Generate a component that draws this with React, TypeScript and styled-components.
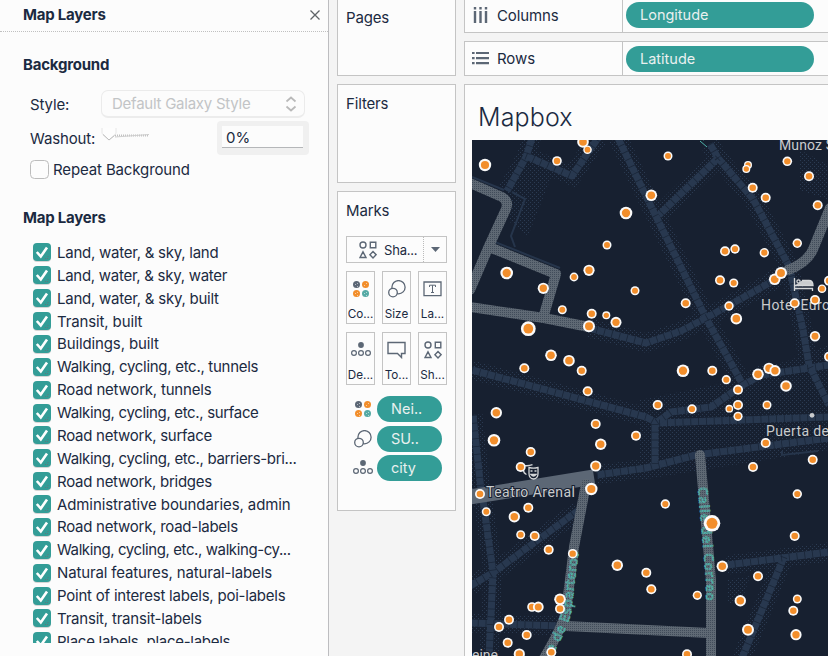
import React from 'react';
import styled, { createGlobalStyle } from 'styled-components';

const ink = '#1b2a41';
const teal = '#339d97';
const slate = '#5c6775';
const line = '#c4c4c4';
const paper = '#fcfcfc';

const GlobalStyle = createGlobalStyle`
  * { box-sizing: border-box; }
  html, body { margin: 0; overflow: hidden; }
  body { font-family: Inter, "Liberation Sans", sans-serif; font-size: 15px; color: ${ink}; background: #f4f4f4; }
`;

const Workspace = styled.div`
  display: flex;
  width: 828px;
  height: 656px;
  overflow: hidden;
`;

const LayersPanel = styled.aside`
  display: flex;
  flex-direction: column;
  width: 329px;
  flex: none;
  background: ${paper};
  border-right: 1px solid #bdbdc0;
`;

const PanelHeader = styled.header`
  display: flex;
  align-items: center;
  justify-content: space-between;
  height: 32px;
  flex: none;
  padding: 0 7px 2px 23px;
  border-bottom: 1px dotted #c0c0c0;
`;

const Heading = styled.h2<{ $top?: number }>`
  margin: ${p => p.$top ?? 0}px 0 0;
  font-size: 15px;
  line-height: 20px;
  font-weight: 700;
  letter-spacing: -0.22px;
`;

const Section = styled.section`
  padding-left: 23px;
`;

const FieldRow = styled.div<{ $height: number; $gap: number }>`
  display: flex;
  align-items: center;
  height: ${p => p.$height}px;
  margin-top: ${p => p.$gap}px;
  padding-left: 7px;
`;

const FieldLabel = styled.span<{ $width?: number }>`
  width: ${p => (p.$width ? p.$width + 'px' : 'auto')};
  flex: none;
  white-space: nowrap;
  letter-spacing: -0.13px;
`;

const StyleSelect = styled.div`
  display: flex;
  align-items: center;
  justify-content: space-between;
  width: 204px;
  height: 28px;
  padding: 0 7px 0 10px;
  color: #c2c4c6;
  letter-spacing: -0.25px;
  border: 1px solid #ebebeb;
  border-bottom: 2px solid #ececec;
  border-radius: 7px;
  white-space: nowrap;
`;

const PercentBox = styled.div`
  width: 92px;
  height: 34px;
  margin-left: 66px;
  padding: 5px 6px 0 5px;
  background: #f0f0f0;
  border-radius: 4px;
`;

const PercentInput = styled.div`
  height: 22px;
  padding-left: 4px;
  line-height: 24px;
  background: ${paper};
  border-bottom: 1px solid #b5b7b9;
  font-size: 15px;
`;

const EmptyCheck = styled.span`
  width: 19px;
  height: 19px;
  margin-right: 4px;
  border: 1px solid #bcbcbc;
  border-radius: 4.5px;
`;

const LayerList = styled.ul`
  height: 402px;
  margin: 13px 0 0;
  padding: 0 0 0 33px;
  overflow: hidden;
  list-style: none;
`;

const LayerItem = styled.li`
  display: flex;
  align-items: center;
  height: 22.88px;
`;

const CheckBox = styled.span`
  display: flex;
  width: 18px;
  height: 18px;
  margin-right: 6px;
  background: ${teal};
  border-radius: 4px;
  box-shadow: 0 1px 0 #d5d5d5;
`;

const LayerName = styled.span<{ $track: number }>`
  letter-spacing: ${p => p.$track}px;
  white-space: nowrap;
`;

const CardColumn = styled.div`
  display: flex;
  flex-direction: column;
  gap: 8px;
  width: 119px;
  flex: none;
  margin-left: 8px;
`;

const Card = styled.section<{ $height: number; $top: number }>`
  height: ${p => p.$height}px;
  flex: none;
  padding: ${p => p.$top}px 8px 0 8px;
  background: ${paper};
  border: 1px solid ${line};

  &:first-child { border-top: 0; }
`;

const CardTitle = styled.div`
  line-height: 20px;
  letter-spacing: -0.15px;
`;

const MarkSelect = styled.div`
  display: flex;
  width: 101px;
  height: 27px;
  margin-top: 15px;
  border: 1px solid ${line};
`;

const MarkType = styled.div`
  display: flex;
  flex: 1;
  align-items: center;
  gap: 7px;
  padding-left: 12px;
  font-size: 13px;
  letter-spacing: -0.2px;
`;

const Caret = styled.div`
  display: flex;
  align-items: center;
  justify-content: center;
  width: 23px;
  border-left: 1px dotted #bbb;
`;

const MarkGrid = styled.div`
  display: grid;
  grid-template-columns: repeat(3, 29px);
  column-gap: 7px;
  row-gap: 8px;
  margin-top: 8px;
`;

const MarkButton = styled.div`
  display: flex;
  flex-direction: column;
  align-items: center;
  justify-content: space-between;
  height: 53px;
  padding: 8px 0 0;
  border: 1px solid ${line};
  font-size: 11.7px;
  line-height: 17px;
  white-space: nowrap;
`;

const PillStack = styled.div`
  display: flex;
  flex-direction: column;
  gap: 3.5px;
  margin-top: 11px;
  padding-left: 6px;
`;

const PillRow = styled.div`
  display: flex;
  align-items: center;
`;

const PillIcon = styled.span`
  display: flex;
  justify-content: center;
  width: 21px;
  margin-right: 4px;
`;

const Pill = styled.span<{ $width: number }>`
  width: ${p => p.$width}px;
  height: 26px;
  flex: none;
  padding-left: 14px;
  border-radius: 13px;
  background: ${teal};
  color: #e9f0ef;
  font-size: 14.5px;
  line-height: 26px;
  white-space: nowrap;
`;

const ViewColumn = styled.main`
  display: flex;
  flex-direction: column;
  gap: 8px;
  flex: 1;
  min-width: 0;
  margin-left: 8px;
`;

const Shelf = styled.div<{ $height: number }>`
  display: flex;
  align-items: center;
  height: ${p => p.$height}px;
  flex: none;
  background: ${paper};
  border: solid ${line};
  border-width: 1px 0 1px 1px;

  &:first-child {
    border-top: 0;
  }
`;

const ShelfLabel = styled.div<{ $lift?: number }>`
  display: flex;
  align-items: center;
  gap: 8px;
  align-self: stretch;
  width: 158px;
  margin-right: 3px;
  padding: 0 0 ${p => p.$lift ?? 0}px 7px;
  border-right: 1px solid ${line};
  letter-spacing: -0.1px;
`;

const PillSlot = styled.div<{ $lift?: number }>`
  padding-bottom: ${p => p.$lift ?? 0}px;
  display: flex;
`;

const Sheet = styled.section`
  flex: 1;
  background: ${paper};
  border: solid ${line};
  border-width: 1px 0 0 1px;
`;

const SheetTitle = styled.h1`
  height: 55px;
  margin: 0;
  padding: 14px 0 0 13px;
  font-size: 25px;
  line-height: 37px;
  font-weight: 300;
  letter-spacing: 0.15px;
`;

const MapCanvas = styled.svg`
  display: block;
  width: 356px;
  height: 516px;
  margin-left: 7px;
`;

const ShapesIcon = () => (
  <svg width="18" height="18" viewBox="0 0 18 18" fill="none" stroke={slate} strokeWidth="1.4">
    <circle cx="4" cy="4" r="3" />
    <path d="M11.300 1.200h5.500v5.500h-5.500zM4 10.8L7 16.5H1zM14 10.5l3.100 3.200-3.100 3.200-3.100-3.200z" />
  </svg>
);

const ColorIcon = () => (
  <svg width="18" height="18" viewBox="0 0 18 18">
    <circle cx="4.5" cy="4.5" r="3.5" fill={slate} />
    <circle cx="13.5" cy="4.5" r="3.5" fill="#f28e2b" />
    <circle cx="4.5" cy="13.5" r="3.5" fill="#f28e2b" />
    <circle cx="13.500" cy="13.5" r="3.5" fill="#56aaa5" />
    <path d="M3 4.500h1M5 6.500h1M5 3.500h1M12 5.500h1M14 3.500h1M3 13.500h1M5 15.500h1M5 12.500h1M12 13.500h1M14 15.500h1M14 12.500h1" stroke="#fff" strokeOpacity=".55" />
  </svg>
);

const SizeIcon = () => (
  <svg width="18" height="18" viewBox="0 0 18 18" fill="none" stroke={slate} strokeWidth="1.3">
    <circle cx="10.5" cy="7.2" r="6.6" />
    <circle cx="5" cy="12.6" r="4.3" fill={paper} />
  </svg>
);

const LabelIcon = () => (
  <svg width="19" height="18" viewBox="0 0 19 18" fill="none" stroke={slate} strokeWidth="1.3">
    <path d="M1 2h17v13.6H1z" />
    <path d="M6.5 7V5.200h6V7M9.5 5.2v7.3M8 12.500h3" strokeWidth="1" />
  </svg>
);

const DetailIcon = () => (
  <svg width="20" height="18" viewBox="0 0 20 18" fill="none" stroke={slate} strokeWidth="1.2">
    <circle cx="10" cy="4" r="2.9" fill={slate} stroke="none" />
    <circle cx="3" cy="12" r="2.4" />
    <circle cx="10" cy="12" r="2.4" />
    <circle cx="17" cy="12" r="2.4" />
  </svg>
);

const TooltipIcon = () => (
  <svg width="19" height="18" viewBox="0 0 19 18" fill="none" stroke={slate} strokeWidth="1.4">
    <path d="M1 1.5h17v11h-3.500v4l-4-4H1z" />
  </svg>
);

const CloseIcon = () => (
  <svg width="12" height="12" viewBox="0 0 12 12" stroke="#5f6468" strokeWidth="1.3">
    <path d="M1.5 1.5l9 9M10.5 1.5l-9 9" />
  </svg>
);

const UpDownIcon = () => (
  <svg width="12" height="16" viewBox="0 0 12 16" fill="none" stroke="#b9b9b9" strokeWidth="1.7">
    <path d="M1.5 5.5L6 1.5l4.500 4M1.5 10.5l4.500 4 4.500-4" />
  </svg>
);

const SliderIcon = () => (
  <svg width="50" height="20" viewBox="0 0 50 20" fill="none">
    <path d="M14 7.5h34" stroke="#c0c0c0" strokeWidth="2" strokeDasharray="1 1" />
    <path d="M14 9l34-2.500" stroke="#cfcfcf" />
    <path d="M1 -1.500Q1 -3 3 -3h10q2 0 2 1.500v6L8 11 1 4.500z" transform="translate(0 1)" fill="#fdfdfd" stroke="#e6e6e6" />
    <path d="M2 6.500L8 12l5.500-4.500" stroke="#bdbdbd" />
  </svg>
);

const CheckMark = () => (
  <svg width="18" height="18" viewBox="0 0 18 18" fill="none">
    <path d="M3.800 9l4 4.500L14 4.400" stroke="#fff" strokeWidth="2.6" />
    <path d="M12 15.5h3M14.5 13.500h2" stroke="#6c6f76" strokeWidth=".8" strokeDasharray="1 1" />
  </svg>
);

const ColumnsIcon = () => (
  <svg width="17" height="18" viewBox="0 0 17 18" fill="none" stroke={slate} strokeWidth="2.4">
    <path d="M3 5v12M8.500 5v12M14 5v12M3 1v2.500M8.500 1v2.500M14 1v2.500" />
  </svg>
);

const RowsIcon = () => (
  <svg width="17" height="16" viewBox="0 0 17 16" fill="none" stroke={slate} strokeWidth="2.2">
    <path d="M4 2h13M4 7.100h13M4 12.200h13M0 2h2.600M0 7.100h2.600M0 12.200h2.600" />
  </svg>
);

const layers: [string, number][] = [
  ['Land, water, & sky, land', -0.25],
  ['Land, water, & sky, water', -0.28],
  ['Land, water, & sky, built', -0.24],
  ['Transit, built', -0.13],
  ['Buildings, built', -0.12],
  ['Walking, cycling, etc., tunnels', -0.29],
  ['Road network, tunnels', -0.2],
  ['Walking, cycling, etc., surface', -0.34],
  ['Road network, surface', -0.26],
  ['Walking, cycling, etc., barriers-bri...', -0.33],
  ['Road network, bridges', -0.27],
  ['Administrative boundaries, admin', -0.1],
  ['Road network, road-labels', -0.26],
  ['Walking, cycling, etc., walking-cy...', -0.4],
  ['Natural features, natural-labels', -0.14],
  ['Point of interest labels, poi-labels', -0.22],
  ['Transit, transit-labels', -0.2],
  ['Place labels, place-labels', -0.27],
];

const markButtons: [string, React.ReactNode][] = [
  ['Co...', <ColorIcon />],
  ['Size', <SizeIcon />],
  ['La...', <LabelIcon />],
  ['De...', <DetailIcon />],
  ['To...', <TooltipIcon />],
  ['Sh...', <ShapesIcon />],
];

const markPills: [string, React.ReactNode][] = [
  ['Nei..', <ColorIcon />],
  ['SU..', <SizeIcon />],
  ['city', <DetailIcon />],
];

const lanes = [
  'M532 138L526 157L507 191',
  'M526 156L572 176L598 138',
  'M618 138L646 196L706 318L743 385',
  'M710 144L718 158L753 199L789 266L803 330L809 365L829 405',
  'M718 158L659 215',
  'M589 328L646 343L681 331L706 318L771 282L789 268',
  'M472 370L646 417L657 423L829 417',
  'M657 422L671 412L711 407L743 385L762 375L829 365',
  'M655 424L655 467',
  'M597 475L646 468L696 455L829 438',
  'M473 415L481 490L484 507L493 572L489 658',
  'M470 586L494 572L579 510',
  'M470 623L562 626',
  'M727 565L829 552',
  'M784 557L742 658',
];

const avenues = [
  'M470 183L502 197Q509 201 506 209L489 246L470 290',
  'M489 247L556 274L543 318',
  'M470 307L544 318L589 327',
  'M830 208L814 247Q809 262 788 270',
  'M586 484L574 547L566 612Q562 628 543 660',
  'M566 626L709 633',
  'M700 455L704 500L711 580L711 658',
];

const dots: [number, number, number][] = [
  [485, 165, 6.2], [557, 161, 4.8], [583, 142, 5.8], [587.5, 149.7, 4.3], [626, 213, 6.3], [607, 245, 4.5],
  [506.7, 273, 6.3], [543.3, 288.3, 5.6], [574, 277, 4.4], [589, 270.3, 5.6], [635, 290.7, 4.5], [562.3, 309.7, 4.5],
  [591.7, 313.7, 5], [606.3, 315.3, 4], [616, 322.3, 5.5], [589, 326.3, 6], [528.3, 328.7, 7.4],
  [668, 156, 4.5], [651.3, 195.3, 5.8], [748, 165, 4], [746.3, 169, 4], [787.3, 161.3, 4.8], [809, 176.3, 5],
  [752.7, 187.7, 5], [765.7, 197.7, 5], [817.7, 205.3, 5], [797.3, 243.3, 4.7], [725, 251.3, 5], [735, 249, 4.7],
  [764.3, 252.7, 4.7], [774.7, 279.3, 5.8], [781, 273, 6], [720, 280.3, 5], [733.7, 283, 4.6], [685.7, 303.3, 5],
  [729, 306, 4.7], [736.3, 318.7, 5.8], [822, 288.7, 4.3], [815, 300, 5], [794.7, 303.3, 5], [829, 280.7, 5],
  [815, 336.3, 5.2], [551, 355.3, 5.8], [569, 360.7, 5.8], [524.3, 368.3, 5], [581.7, 370.7, 5], [587.7, 391.3, 5],
  [496.3, 412.7, 5.7], [494, 440.3, 6.3], [530.7, 452, 5], [520.7, 467, 5], [595.7, 424, 5], [600.7, 444.3, 5.7],
  [595.7, 466, 5.6], [591.3, 489, 6.2], [636, 435.7, 5], [480, 494, 5], [683, 370.7, 6.3], [712.3, 370.7, 5],
  [726.3, 379.7, 4.6], [738, 389.7, 5], [738, 405, 5], [729.3, 408.7, 3.9], [738, 416.3, 4.6], [758, 374.3, 5.8],
  [769, 368.3, 5.6], [775, 370.7, 5.6], [786, 386, 5.8], [767, 405, 4.5], [692, 409, 4.7], [657.7, 405, 5],
  [765.7, 443, 5], [753, 467, 5], [812.7, 459.7, 5], [797.3, 494, 4.7], [829, 356.7, 5],
  [486.3, 511.7, 4.5], [528.3, 507.7, 5], [514.3, 516.7, 5.7], [520.7, 534.7, 4.5], [534.7, 536, 5], [548.7, 549.7, 5],
  [572.7, 553.7, 4.8], [665.3, 504, 4.7], [712, 523.3, 8.3], [617.3, 565.3, 5.7], [646.3, 572.7, 5], [651.3, 589.3, 5],
  [697.3, 595.3, 4.6], [722.3, 566.3, 5.7], [758, 576.3, 5], [740.3, 600.7, 5.7], [748, 629.7, 6], [794.7, 536, 5],
  [797.3, 599, 4.5], [793.3, 610.7, 5], [796, 634.7, 5.6], [687, 654.3, 5], [560, 599.3, 5.8], [560, 608.7, 5],
  [532, 607, 4.8], [538.3, 607, 5.4], [509, 619.7, 5], [499, 627, 5], [526.7, 635, 5], [507.7, 642.7, 5],
  [519.3, 654, 5.6], [551.3, 652.3, 5],
];

const CityMap = () => (
  <MapCanvas viewBox="472 140 356 516">
    <defs>
      <pattern id="grain" width="2" height="2" patternUnits="userSpaceOnUse">
        <rect width="2" height="2" fill="#5f6974" />
        <rect width="1" height="1" fill="#414c5a" />
      </pattern>
      <pattern id="haze" width="4" height="4" patternUnits="userSpaceOnUse">
        <rect width="1" height="1" fill="#2b3b52" />
        <rect x="2" y="2" width="1" height="1" fill="#2b3b52" />
      </pattern>
      <path id="correo" d="M703 487L711 580L711 615" />
      <path id="esparteros" d="M549 651Q562 628 566 612L575 540" />
    </defs>
    <rect x="472" y="140" width="356" height="516" fill="#172030" />
    <path d="M528 158L554 170L528 236L510 222L507 191ZM800 150L828 165V200L800 190ZM640 400L740 380L828 345V450L640 480ZM728 580L750 576L742 600L728 604Z" fill="url(#haze)" />
    <g fill="none" stroke="url(#haze)" strokeWidth="19">
      {lanes.map(d => <path key={d} d={d} />)}
    </g>
    <g fill="none" stroke="#28384f" strokeWidth="7" strokeLinejoin="round">
      {lanes.map(d => <path key={d} d={d} />)}
    </g>
    <g fill="none" stroke="#1a2638" strokeWidth="7">
      {lanes.map(d => <path key={d} d={d} strokeDasharray=".8 7" />)}
    </g>
    <path d="M472 177L504 190M512 192L525 199L511 236L515 247M490 240L560 268M782 451V455L818 451" fill="none" stroke="#26354b" strokeWidth="2" />
    <path d="M470 497L594 477" stroke="#5c6775" strokeWidth="15" />
    <g fill="none" stroke="url(#grain)" strokeWidth="10" strokeLinecap="round" strokeLinejoin="round">
      {avenues.map(d => <path key={d} d={d} />)}
    </g>
    <g fontFamily='"Noto Sans", sans-serif' fontSize="13" fill="#5c6775" stroke="#4fb5ab" strokeWidth=".9" dominantBaseline="central" strokeDasharray="2 .7">
      <text textLength="114"><textPath href="#correo">Calle del Correo</textPath></text>
      <text textLength="104"><textPath href="#esparteros">e de Esparteros</textPath></text>
    </g>
    <path d="M700 141l7 6M703 140l3-1" stroke="#4fb5ab" fill="none" />
    <g fontFamily='Roboto, "Noto Sans", sans-serif' fontSize="14" fill="#c9cbcd" stroke="#172030" strokeWidth="2" paintOrder="stroke">
      <text x="779" y="150" textLength="55">Munoz S</text>
      <text x="761" y="310" textLength="69">Hotel Euro</text>
      <text x="766" y="436" textLength="63">Puerta de</text>
      <text x="486" y="497" textLength="89">Teatro Arenal</text>
      <text x="472" y="660" textLength="26">eine</text>
    </g>
    <g stroke="#d5d7d8" fill="none" strokeWidth="1.3">
      <path d="M794.5 278v13M794 288.5h19M812.5 288v3" />
      <circle cx="798.5" cy="281.5" r="1.6" />
      <path d="M802 280.5h7q4 0 4 5h-18" fill="#c9cbcd" />
      <path d="M529 467.5q4.500 1.200 9 0v6q0 5-4.500 5.500q-4.500-.5-4.500-5.500zM526.500 474.500q-3-1-3-4.500v-4.500q5 .8 9-.8" />
      <path d="M530.500 471h2M534.500 471h2M531 474.500q2.500 3 5 0z" />
    </g>
    <circle cx="812" cy="415.3" r="2.4" fill="#c9cbcd" />
    {dots.map(([x, y, r]) => (
      <g key={x + ':' + y}>
        <circle cx={x} cy={y} r={r} fill="#fafafa" />
        <circle cx={x} cy={y} r={r * 0.66} fill="#f28e2b" />
      </g>
    ))}
  </MapCanvas>
);

export default function App() {
  return (
    <>
      <GlobalStyle />
      <Workspace>
        <LayersPanel>
          <PanelHeader>
            <Heading>Map Layers</Heading>
            <CloseIcon />
          </PanelHeader>
          <Section>
            <Heading $top={23}>Background</Heading>
            <FieldRow $height={28} $gap={15}>
              <FieldLabel $width={71}>Style:</FieldLabel>
              <StyleSelect>Default Galaxy Style<UpDownIcon /></StyleSelect>
            </FieldRow>
            <FieldRow $height={34} $gap={3}>
              <FieldLabel $width={71}>Washout:</FieldLabel>
              <SliderIcon />
              <PercentBox><PercentInput>0%</PercentInput></PercentBox>
            </FieldRow>
            <FieldRow $height={20} $gap={4}>
              <EmptyCheck />
              <FieldLabel>Repeat Background</FieldLabel>
            </FieldRow>
            <Heading $top={29}>Map Layers</Heading>
          </Section>
          <LayerList>
            {layers.map(([name, track]) => (
              <LayerItem key={name}>
                <CheckBox><CheckMark /></CheckBox>
                <LayerName $track={track}>{name}</LayerName>
              </LayerItem>
            ))}
          </LayerList>
        </LayersPanel>
        <CardColumn>
          <Card $height={76} $top={8}><CardTitle>Pages</CardTitle></Card>
          <Card $height={99} $top={9}><CardTitle>Filters</CardTitle></Card>
          <Card $height={320} $top={9}>
            <CardTitle>Marks</CardTitle>
            <MarkSelect>
              <MarkType><ShapesIcon />Sha...</MarkType>
              <Caret><svg width="9" height="5" viewBox="0 0 9 5" fill={slate}><path d="M0 0h9L4.500 5z" /></svg></Caret>
            </MarkSelect>
            <MarkGrid>
              {markButtons.map(([name, icon]) => <MarkButton key={name}>{icon}{name}</MarkButton>)}
            </MarkGrid>
            <PillStack>
              {markPills.map(([name, icon]) => (
                <PillRow key={name}>
                  <PillIcon>{icon}</PillIcon>
                  <Pill $width={65}>{name}</Pill>
                </PillRow>
              ))}
            </PillStack>
          </Card>
        </CardColumn>
        <ViewColumn>
          <Shelf $height={33}>
            <ShelfLabel $lift={2}><ColumnsIcon />Columns</ShelfLabel>
            <PillSlot $lift={2}><Pill $width={188}>Longitude</Pill></PillSlot>
          </Shelf>
          <Shelf $height={35}>
            <ShelfLabel><RowsIcon />Rows</ShelfLabel>
            <PillSlot><Pill $width={188}>Latitude</Pill></PillSlot>
          </Shelf>
          <Sheet>
            <SheetTitle>Mapbox</SheetTitle>
            <CityMap />
          </Sheet>
        </ViewColumn>
      </Workspace>
    </>
  );
}
